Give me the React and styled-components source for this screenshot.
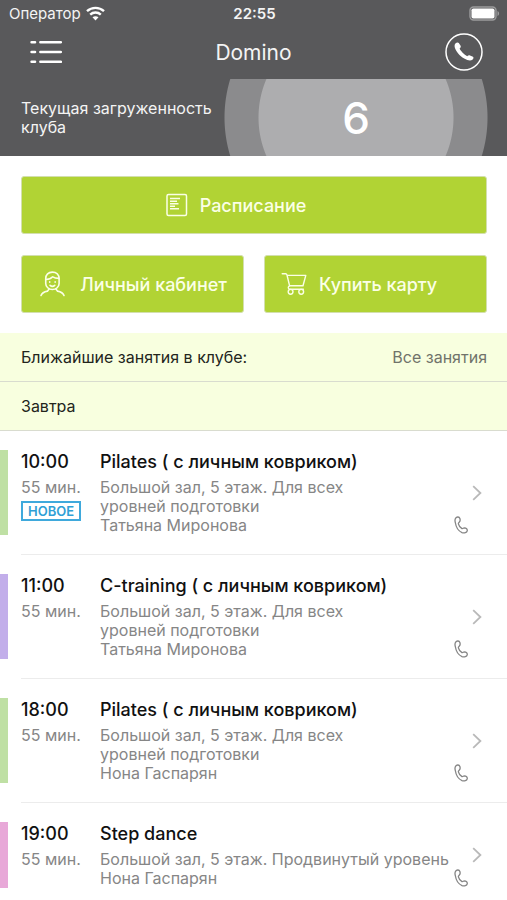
import React from 'react';
import styled, { createGlobalStyle } from 'styled-components';

const GlobalStyle = createGlobalStyle`
  * {
    box-sizing: border-box;
  }

  body {
    margin: 0;
    background-color: #fff;
    color: #111;
    font-family: Inter, "Liberation Sans", sans-serif;
    font-size: 16px;
  }

  h1, h2, h3, p, ul {
    margin: 0;
    padding: 0;
  }

  button {
    font-family: inherit;
    border: none;
    padding: 0;
    background: none;
    cursor: pointer;
  }
`;

const Header = styled.header`
  background-color: #59595b;
  color: #f4f4f4;
`;

const StatusBar = styled.div`
  display: grid;
  grid-template-columns: 1fr auto 1fr;
  align-items: center;
  height: 27px;
  padding: 0 7px 0 9px;
  font-size: 15px;
`;

const Carrier = styled.div`
  display: flex;
  align-items: center;
  gap: 5px;
`;

const Clock = styled.time`
  font-weight: 600;
`;

const BatteryIcon = styled.svg`
  justify-self: end;
`;

const NavBar = styled.nav`
  display: grid;
  grid-template-columns: 1fr auto 1fr;
  align-items: center;
  height: 52px;
  padding: 0 24px 2px;
`;

const IconButton = styled.button`
  display: flex;
  color: #fff;
  justify-self: ${props => props.$side};
`;

const Title = styled.h1`
  font-size: 21px;
  font-weight: 400;
`;

const LoadPanel = styled.section`
  display: flex;
  align-items: center;
  justify-content: space-between;
  height: 77px;
  padding: 0 19px 0 21px;
`;

const LoadLabel = styled.h2`
  flex: 1;
  font-size: 16px;
  font-weight: 400;
  line-height: 19px;
`;

const LoadGauge = styled.div`
  display: flex;
  align-items: center;
  justify-content: center;
  width: 264px;
  height: 100%;
  background: radial-gradient(circle, #adadaf 97px, #8b8b8d 98px, #8b8b8d 131px, transparent 132px);
  color: #fff;
  font-size: 44px;
  font-weight: 500;
`;

const Actions = styled.div`
  display: grid;
  grid-template-columns: repeat(2, minmax(0, 1fr));
  gap: 21px 20px;
  padding: 20px 20px 20px 21px;
`;

const ActionButton = styled.button`
  display: flex;
  align-items: center;
  justify-content: ${props => (props.$wide ? 'center' : 'flex-start')};
  grid-column: ${props => (props.$wide ? '1 / -1' : 'auto')};
  gap: 12px;
  height: 58px;
  padding: ${props => (props.$wide ? '0 52px 0 16px' : '0 16px')};
  border: 1px solid #d3dfae;
  border-radius: 3px;
  background-color: #b1d334;
  color: #fbffe6;
  font-size: 18px;
  font-weight: 500;
  white-space: nowrap;
`;

const Band = styled.div`
  display: flex;
  align-items: center;
  justify-content: space-between;
  height: 49px;
  padding: 0 20px 0 21px;
  border-bottom: 1px solid #d9dccf;
  background-color: #f8ffdf;
`;

const BandTitle = styled.h2`
  font-size: 16px;
  font-weight: 400;
  color: #23251c;
`;

const AllLink = styled.a`
  color: #70736a;
  text-decoration: none;
`;

const List = styled.ul`
  list-style: none;
`;

const Row = styled.li`
  display: flex;
  padding-top: 19px;
`;

const Stripe = styled.div`
  width: 8px;
  margin-right: 13px;
  margin-bottom: 20px;
  background-color: ${props => props.$color};

  ${Row}:last-child & {
    margin-bottom: 0;
  }
`;

const RowContent = styled.div`
  flex: 1;
  display: flex;
  padding: 0 25px 19px 0;
  border-bottom: 1px solid #ececec;

  ${Row}:last-child & {
    padding-bottom: 0;
    border-bottom: none;
  }
`;

const TimeColumn = styled.div`
  width: 79px;
`;

const Heading = styled.h3`
  margin-bottom: 5px;
  font-size: 18px;
  font-weight: 500;
  line-height: 23px;
`;

const Meta = styled.p`
  font-size: 16px;
  line-height: 19px;
  color: #868686;
  white-space: pre-line;
`;

const Badge = styled.span`
  display: inline-block;
  margin-top: 4px;
  padding: 0 5px;
  border: 2px solid #3fa9dc;
  color: #2f9fd6;
  font-size: 13px;
  font-weight: 600;
  line-height: 16px;
`;

const Details = styled.div`
  flex: 1;
`;

const CallButton = styled.button`
  display: flex;
  align-self: flex-end;
  margin-right: 4px;
`;

const OpenButton = styled.button`
  display: flex;
  align-self: center;
`;

const classes = [
  {
    time: '10:00',
    title: 'Pilates ( с личным ковриком)',
    place: 'Большой зал, 5 этаж. Для всех\nуровней подготовки',
    trainer: 'Татьяна Миронова',
    color: '#bfe0a4',
    isNew: true
  },
  {
    time: '11:00',
    title: 'C-training ( с личным ковриком)',
    place: 'Большой зал, 5 этаж. Для всех\nуровней подготовки',
    trainer: 'Татьяна Миронова',
    color: '#c2aeea'
  },
  {
    time: '18:00',
    title: 'Pilates ( с личным ковриком)',
    place: 'Большой зал, 5 этаж. Для всех\nуровней подготовки',
    trainer: 'Нона Гаспарян',
    color: '#bfe0a4'
  },
  {
    time: '19:00',
    title: 'Step dance',
    place: 'Большой зал, 5 этаж. Продвинутый уровень',
    trainer: 'Нона Гаспарян',
    color: '#e8a8d8'
  }
];

function WifiIcon() {
  return (
    <svg width="19" height="15" viewBox="0 0 19 15" fill="none" stroke="#fff" strokeWidth="2.4">
      <path d="M1 5.2C5.8 0.8 13.2 0.8 18 5.2" />
      <path d="M4.2 8.6C7.2 5.8 11.8 5.8 14.8 8.6" />
      <path d="M9.5 14.4L6.5 11.3C8.2 9.8 10.8 9.8 12.5 11.3Z" fill="#fff" stroke="none" />
    </svg>
  );
}

function Battery() {
  return (
    <BatteryIcon width="31" height="15" viewBox="0 0 31 15">
      <rect x="1" y="1" width="26" height="13" rx="3.5" fill="none" stroke="#9c9c9d" strokeWidth="1.4" />
      <rect x="2.5" y="2.5" width="23" height="10" rx="1.8" fill="#fff" />
      <path d="M28.5 5C30.6 6 30.6 9 28.5 10Z" fill="#9c9c9d" />
    </BatteryIcon>
  );
}

function MenuIcon() {
  return (
    <svg width="38" height="24" viewBox="-6 0 38 24" stroke="#fff" strokeWidth="2.6" strokeLinecap="round">
      <path d="M1.6 2.2H5M10.4 2.2H30.8M1.6 12H5M10.4 12H30.8M1.6 21.8H5M10.4 21.8H30.8" />
    </svg>
  );
}

function PhoneCircleIcon() {
  return (
    <svg width="38" height="38" viewBox="0 0 38 38">
      <circle cx="19" cy="19" r="18" fill="none" stroke="#fff" strokeWidth="1.5" />
      <path
        d="M10.4 10.6C11.4 9.4 13 9 13.8 10L15.6 12.8C16.2 14 15.4 14.8 14.6 15.6C15.4 18 19.4 21.8 22.2 23.2C23 22.6 23.8 22 25 22.4L28 23.8C29 24.6 28.4 26 27.4 26.8C25.6 28.2 22.6 27.6 19.2 25.6C14.6 22.8 11 18.4 9.8 14.4C9.4 12.8 9.6 11.6 10.4 10.6Z"
        fill="#fff"
      />
    </svg>
  );
}

function ScheduleIcon() {
  return (
    <svg width="22" height="24" viewBox="0 0 22 24" fill="none" stroke="#fbffe6" strokeWidth="1.5">
      <rect x="1" y="1.5" width="19.5" height="21" rx="1.5" />
      <path d="M4 5.5H14M4 8.3H11M4 10.8H12.5M4 13.3H9M4 15.8H13" />
    </svg>
  );
}

function UserIcon() {
  return (
    <svg width="32" height="28" viewBox="-2 0 32 28" fill="none" stroke="#fbffe6" strokeWidth="1.7" strokeLinecap="round" strokeLinejoin="round">
      <path d="M6.2 8.4C6.2 4.2 9 1.4 13.2 1.4C17.6 1.4 20.4 4.2 20.4 8.4V13.6C20.4 17 17.2 19.8 13.3 19.8C9.4 19.8 6.2 17 6.2 13.6Z" />
      <path d="M6.4 9.2C9.4 9.2 12 8.2 13.6 6.4C15.4 7.6 17.6 8 20.2 8" />
      <path d="M10.4 11.6V12.2M16.2 11.6V12.2M10.8 15.4C12.2 16.6 14.4 16.6 15.8 15.4" />
      <path d="M1.2 26.2C2.2 23.4 4.8 22.2 8 21.6L9.8 19.4M25.6 26.2C24.6 23.4 22 22.2 18.8 21.6L17 19.4" />
    </svg>
  );
}

function CartIcon() {
  return (
    <svg width="26" height="24" viewBox="0 0 26 24" fill="none" stroke="#fbffe6" strokeWidth="1.4" strokeLinecap="round" strokeLinejoin="round">
      <path d="M1.2 1.8H4.6C5.4 1.8 5.8 2.4 6 3L8.6 13.8H22L24.8 3.4H6.2" />
      <path d="M8.6 13.8C6.8 14.6 6.8 17.2 8.8 17.2H22.4" />
      <circle cx="9.6" cy="19.8" r="2.4" />
      <circle cx="20.2" cy="19.8" r="2.4" />
    </svg>
  );
}

function HandsetIcon() {
  return (
    <svg width="14" height="19" viewBox="0 0 14 19" fill="none" stroke="#858585" strokeWidth="1.3" strokeLinejoin="round">
      <path d="M1.3 6.5C0.3 3 2 0.8 4 1C5.8 1.2 6.6 3.6 5.8 5.4C5.2 6.6 4.2 6.6 4.4 7.8C4.8 9.6 6.4 11.6 8 12.6C9 13 9.2 12 10.4 11.8C12.2 11.8 13.6 13.2 13.2 14.8C12.8 16.6 10.4 17.4 8 16.6C4.8 15.2 2 11 1.3 6.5Z" />
    </svg>
  );
}

function ChevronIcon() {
  return (
    <svg width="10" height="16" viewBox="0 0 10 16" fill="none" stroke="#b9b9b9" strokeWidth="1.8">
      <path d="M1.2 1.2L8.4 8L1.2 14.8" />
    </svg>
  );
}

function ClassRow({ item }) {
  return (
    <Row>
      <Stripe $color={item.color} />
      <RowContent>
        <TimeColumn>
          <Heading as="p">{item.time}</Heading>
          <Meta>55 мин.</Meta>
          {item.isNew && <Badge>НОВОЕ</Badge>}
        </TimeColumn>
        <Details>
          <Heading>{item.title}</Heading>
          <Meta>{item.place}</Meta>
          <Meta>{item.trainer}</Meta>
        </Details>
        <CallButton aria-label="Позвонить">
          <HandsetIcon />
        </CallButton>
        <OpenButton aria-label="Подробнее">
          <ChevronIcon />
        </OpenButton>
      </RowContent>
    </Row>
  );
}

function App() {
  return (
    <>
      <GlobalStyle />
      <Header>
        <StatusBar>
          <Carrier>
            Оператор
            <WifiIcon />
          </Carrier>
          <Clock>22:55</Clock>
          <Battery />
        </StatusBar>
        <NavBar>
          <IconButton $side="start" aria-label="Меню">
            <MenuIcon />
          </IconButton>
          <Title>Domino</Title>
          <IconButton $side="end" aria-label="Позвонить в клуб">
            <PhoneCircleIcon />
          </IconButton>
        </NavBar>
        <LoadPanel>
          <LoadLabel>Текущая загруженность клуба</LoadLabel>
          <LoadGauge>6</LoadGauge>
        </LoadPanel>
      </Header>
      <main>
        <Actions>
          <ActionButton $wide>
            <ScheduleIcon />
            Расписание
          </ActionButton>
          <ActionButton>
            <UserIcon />
            Личный кабинет
          </ActionButton>
          <ActionButton>
            <CartIcon />
            Купить карту
          </ActionButton>
        </Actions>
        <Band>
          <BandTitle>Ближайшие занятия в клубе:</BandTitle>
          <AllLink href="#all">Все занятия</AllLink>
        </Band>
        <Band>
          <BandTitle as="h3">Завтра</BandTitle>
        </Band>
        <List>
          {classes.map(item => (
            <ClassRow key={item.time} item={item} />
          ))}
        </List>
      </main>
    </>
  );
}

export default App;
